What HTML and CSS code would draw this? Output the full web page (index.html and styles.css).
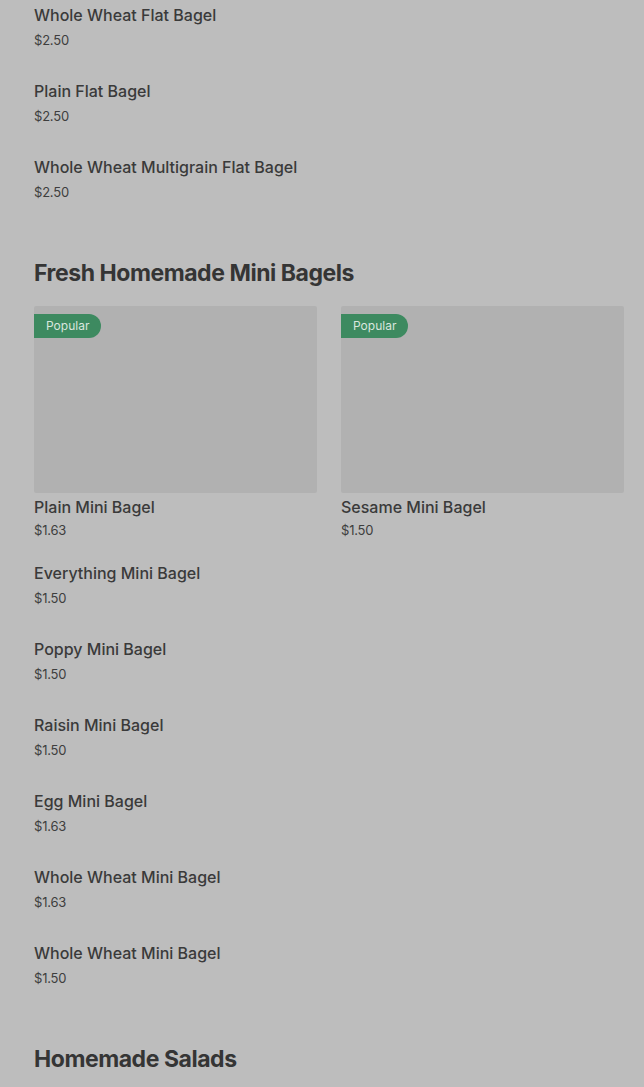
FILE: index.html
```html
<!DOCTYPE html>
<html>
<head>
<meta charset="utf-8">
<link rel="stylesheet" href="styles.css">
</head>
<body>
<div class="page">
  <ul class="list list-top">
    <li class="item"><div class="name">Whole Wheat Flat Bagel</div><div class="price">$2.50</div></li>
    <li class="item"><div class="name">Plain Flat Bagel</div><div class="price">$2.50</div></li>
    <li class="item"><div class="name">Whole Wheat Multigrain Flat Bagel</div><div class="price">$2.50</div></li>
  </ul>

  <section class="section">
    <h2 class="heading">Fresh Homemade Mini Bagels</h2>
    <div class="cards">
      <div class="card">
        <div class="thumb"><span class="badge">Popular</span></div>
        <div class="card-name">Plain Mini Bagel</div>
        <div class="card-price">$1.63</div>
      </div>
      <div class="card">
        <div class="thumb"><span class="badge">Popular</span></div>
        <div class="card-name">Sesame Mini Bagel</div>
        <div class="card-price">$1.50</div>
      </div>
    </div>
    <ul class="list">
      <li class="item"><div class="name">Everything Mini Bagel</div><div class="price">$1.50</div></li>
      <li class="item"><div class="name">Poppy Mini Bagel</div><div class="price">$1.50</div></li>
      <li class="item"><div class="name">Raisin Mini Bagel</div><div class="price">$1.50</div></li>
      <li class="item"><div class="name">Egg Mini Bagel</div><div class="price">$1.63</div></li>
      <li class="item"><div class="name">Whole Wheat Mini Bagel</div><div class="price">$1.63</div></li>
      <li class="item"><div class="name">Whole Wheat Mini Bagel</div><div class="price">$1.50</div></li>
    </ul>
  </section>

  <section class="section">
    <h2 class="heading">Homemade Salads</h2>
  </section>
</div>
</body>
</html>
```

FILE: styles.css
```css
html, body {
  margin: 0;
  padding: 0;
  background: #bdbdbd;
}
body {
  font-family: Inter, "Liberation Sans", sans-serif;
  color: #3a3a3a;
}
.page {
  padding: 3px 20px 0 34px;
}
.list {
  list-style: none;
  margin: 0;
  padding: 0;
}
.item {
  height: 76px;
}
.list .item:last-child {
  height: 102px;
}
.name {
  font-size: 16px;
  line-height: 24px;
  font-weight: 500;
  color: #3a3a3a;
}
.price {
  font-size: 13px;
  line-height: 20px;
  margin-top: 3px;
  color: #3e3e3e;
  letter-spacing: -0.2px;
}
.heading {
  margin: 0;
  font-size: 23px;
  line-height: 32px;
  font-weight: 700;
  letter-spacing: -0.45px;
  color: #353535;
  height: 49px;
}
.cards {
  display: grid;
  grid-template-columns: 1fr 1fr;
  gap: 24px;
}
.card {
  height: 255px;
}
.thumb {
  position: relative;
  height: 187px;
  background: #b1b1b1;
  border-radius: 2px;
}
.badge {
  position: absolute;
  left: 0;
  top: 8px;
  height: 24px;
  line-height: 24px;
  padding: 0 12px;
  background: #3d8a60;
  color: #d9e6de;
  font-size: 12px;
  border-radius: 0 12px 12px 0;
}
.card-name {
  margin-top: 3px;
  font-size: 16px;
  line-height: 22px;
  font-weight: 500;
}
.card-price {
  margin-top: 2px;
  font-size: 13px;
  line-height: 20px;
  letter-spacing: -0.2px;
  color: #3e3e3e;
}
```
